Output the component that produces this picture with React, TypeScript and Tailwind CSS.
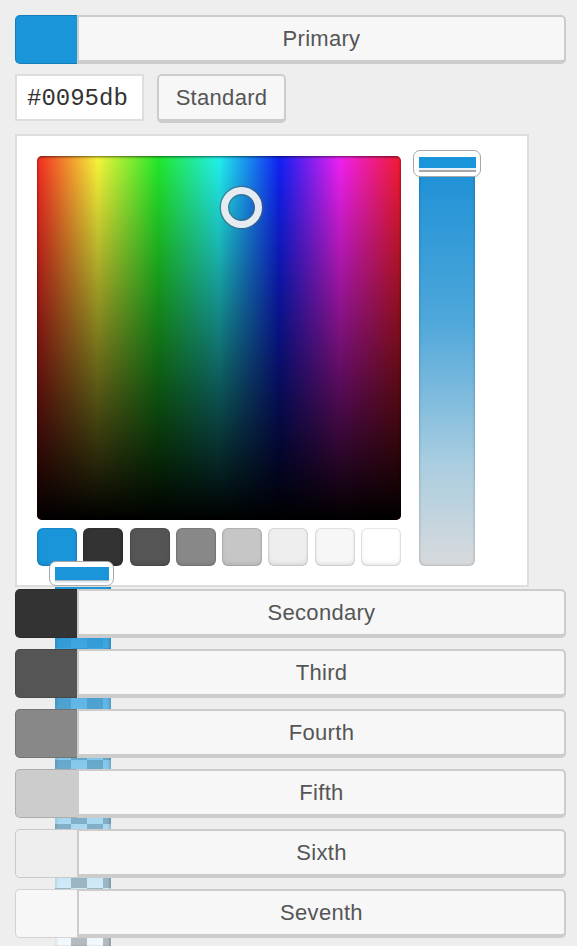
const ROWS = [
  { label: 'Secondary', color: 'bg-[#333333]' },
  { label: 'Third', color: 'bg-[#555555]' },
  { label: 'Fourth', color: 'bg-[#888888]' },
  { label: 'Fifth', color: 'bg-[#cccccc]' },
  { label: 'Sixth', color: 'bg-[#eeeeee]' },
  { label: 'Seventh', color: 'bg-[#f7f7f7]' },
]

const PALETTE = [
  'bg-[#1a95d9]',
  'bg-[#333333]',
  'bg-[#555555]',
  'bg-[#888888]',
  'bg-[#c6c6c6]',
  'bg-[#eeeeee]',
  'bg-[#f7f7f7]',
  'bg-[#ffffff]',
]

function ColorRow({ label, color }: { label: string; color: string }) {
  return (
    <div className="flex h-[49px] w-[551px]">
      <div className={`w-[62px] rounded-l-[5px] border border-r-0 border-black/15 ${color}`} />
      <div className="flex-1 flex items-center justify-center bg-[#f7f7f7] border-2 border-b-[4px] border-[#cccccc] rounded-r-[5px] text-[22px] tracking-[0.3px] text-[#555555]">
        {label}
      </div>
    </div>
  )
}

export default function App() {
  return (
    <div className="relative min-h-[946px] h-[946px] overflow-hidden bg-[#eeeeee] font-['Liberation_Sans',Arial,sans-serif]">
      {/* alpha strip peeking out under the rows */}
      <div className="absolute left-[55px] top-[584px] w-[56px] bottom-0 bg-[image:linear-gradient(to_bottom,rgba(26,149,217,1),rgba(26,149,217,0.05)),repeating-conic-gradient(#bebebe_0_25%,#ffffff_0_50%)] bg-[length:100%_100%,32px_32px] shadow-[inset_-2px_0_2px_rgba(0,0,0,0.15),inset_2px_0_2px_rgba(0,0,0,0.08)]" />

      <div className="relative pl-[15px] pt-[15px]">
        {/* Primary */}
        <ColorRow label="Primary" color="bg-[#1a95d9]" />

        {/* Hex + Standard */}
        <div className="mt-[10px] flex items-start gap-[13px]">
          <div className="w-[129px] h-[47px] bg-white border-2 border-[#dddddd] flex items-center pl-[10px] pt-[3px] font-['Liberation_Mono',monospace] text-[24px] text-[#333333]">
            #0095db
          </div>
          <div className="w-[129px] h-[49px] bg-[#f7f7f7] border-2 border-b-[4px] border-[#cccccc] rounded-[5px] flex items-center justify-center text-[22px] tracking-[0.3px] text-[#555555]">
            Standard
          </div>
        </div>

        {/* Picker */}
        <div className="relative mt-[11px] w-[514px] h-[453px] bg-white border-2 border-[#dddddd] pt-[20px] pl-[20px]">
          <div className="flex gap-[18px]">
            <div className="w-[364px]">
              <div className="relative h-[364px] rounded-[5px] overflow-hidden bg-[linear-gradient(to_right,#f42a22,#f7f53a,#22e82a,#22f0ee,#1020f5,#f020f0,#f21a30)] shadow-[inset_0_1px_2px_rgba(0,0,0,0.3)]">
                <div className="absolute inset-0 bg-[linear-gradient(to_bottom,rgba(0,0,0,0)_0%,rgba(0,0,0,1)_100%)] shadow-[inset_0_1px_3px_rgba(0,0,0,0.35)]" />
                <div className="absolute left-[184px] top-[31px] w-[41px] h-[41px] rounded-full border-[7px] border-[#e6ebf1] shadow-[0_0_0_1.5px_rgba(80,90,100,0.55),inset_0_0_0_1.5px_rgba(80,90,100,0.55)]" />
              </div>
              <div className="mt-[8px] flex justify-between">
                {PALETTE.map((c, i) => (
                  <div
                    key={i}
                    className={`w-[40px] h-[38px] rounded-[6px] ${c} shadow-[inset_0_0_0_1px_rgba(0,0,0,0.08),inset_0_-2px_4px_rgba(0,0,0,0.12)]`}
                  />
                ))}
              </div>
            </div>
            <div className="w-[56px] h-[410px] rounded-b-[6px] rounded-t-[3px] bg-[linear-gradient(to_bottom,#1a8fd6,#4ea7da_40%,#a9cde0_75%,#d8dadc)] shadow-[inset_0_0_3px_rgba(0,0,0,0.3)]" />
          </div>

          {/* vertical slider handle */}
          <div className="absolute left-[396px] top-[14px] w-[68px] h-[27px] rounded-[7px] bg-white border-[1.5px] border-[#a8a8a8] px-[4.5px] pt-[6px]">
            <div className="h-[11px] bg-[#1a95d9]" />
            <div className="h-[2px] bg-[#e8f2f9]" />
            <div className="h-[1.5px] bg-[#a8a8a8]" />
          </div>

          {/* alpha handle */}
          <div className="absolute left-[32px] top-[425px] w-[65px] h-[25px] rounded-[7px] bg-white border-[1.5px] border-[#a8a8a8] px-[4.5px] pt-[4.5px]">
            <div className="h-[13px] bg-[#1a95d9]" />
            <div className="h-[1.5px] bg-[#a8b4bd]" />
            <div className="h-[2px] bg-[#e2eef6]" />
          </div>
        </div>

        {/* Other colours */}
        <div className="mt-[2px] flex flex-col gap-[11px]">
          {ROWS.map(r => (
            <ColorRow key={r.label} label={r.label} color={r.color} />
          ))}
        </div>
      </div>
    </div>
  )
}
